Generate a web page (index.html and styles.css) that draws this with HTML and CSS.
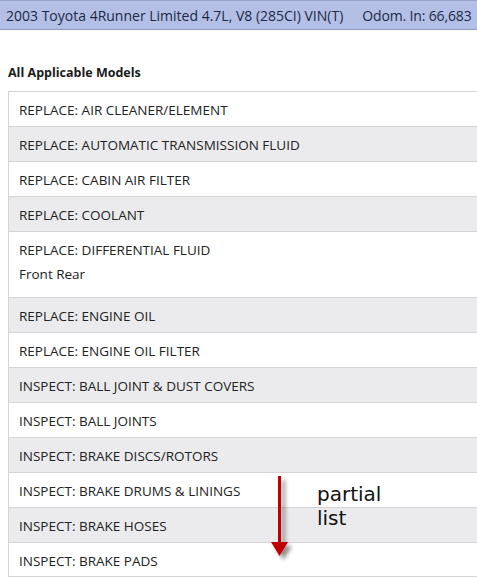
FILE: index.html
```html
<!DOCTYPE html>
<html>
<head>
<meta charset="utf-8">
<link rel="stylesheet" href="styles.css">
</head>
<body>
<div class="vehicle-bar">
  <span>2003 Toyota 4Runner Limited 4.7L, V8 (285CI) VIN(T)</span>
  <span class="odom">Odom. In: 66,683</span>
</div>
<div class="content">
  <h2 class="section-title">All Applicable Models</h2>
  <ul class="ops">
    <li class="op">REPLACE: AIR CLEANER/ELEMENT</li>
    <li class="op alt">REPLACE: AUTOMATIC TRANSMISSION FLUID</li>
    <li class="op">REPLACE: CABIN AIR FILTER</li>
    <li class="op alt">REPLACE: COOLANT</li>
    <li class="op">REPLACE: DIFFERENTIAL FLUID<div class="sub">Front Rear</div></li>
    <li class="op alt">REPLACE: ENGINE OIL</li>
    <li class="op">REPLACE: ENGINE OIL FILTER</li>
    <li class="op alt">INSPECT: BALL JOINT &amp; DUST COVERS</li>
    <li class="op">INSPECT: BALL JOINTS</li>
    <li class="op alt">INSPECT: BRAKE DISCS/ROTORS</li>
    <li class="op">INSPECT: BRAKE DRUMS &amp; LININGS</li>
    <li class="op alt">INSPECT: BRAKE HOSES</li>
    <li class="op">INSPECT: BRAKE PADS</li>
  </ul>
  <div class="annotation">
    <svg class="arrow" width="30" height="100" viewBox="0 0 30 100">
      <defs>
        <filter id="sh" x="-50%" y="-20%" width="200%" height="140%">
          <feGaussianBlur in="SourceAlpha" stdDeviation="2"/>
          <feOffset dx="4" dy="4"/>
          <feComponentTransfer><feFuncA type="linear" slope="0.45"/></feComponentTransfer>
          <feMerge><feMergeNode/><feMergeNode in="SourceGraphic"/></feMerge>
        </filter>
      </defs>
      <g filter="url(#sh)">
        <rect x="12" y="3" width="3" height="68" fill="#c00000"/>
        <polygon points="5,69 22,69 13.5,83" fill="#c00000"/>
      </g>
    </svg>
    <div class="note">partial<br>list</div>
  </div>
</div>
</body>
</html>
```
FILE: styles.css
```css
html, body {
  margin: 0;
  padding: 0;
  background: #ffffff;
  overflow: hidden;
}
body {
  width: 477px;
  height: 579px;
  position: relative;
  overflow: hidden;
  font-family: "Open Sans", "Noto Sans", sans-serif;
}
.vehicle-bar {
  display: flex;
  gap: 19px;
  height: 28px;
  align-items: center;
  padding-left: 6px;
  background: #b3bfe4;
  border-top: 1px solid #9aa4c4;
  border-bottom: 1px solid #8e99bb;
  color: #1b2a4a;
  font-size: 14px;
  white-space: nowrap;
  overflow: hidden;
}
.odom {
  letter-spacing: -0.15px;
}
.content {
  padding-left: 8px;
}
.section-title {
  margin: 0;
  padding-top: 34px;
  height: 27px;
  font-size: 12.5px;
  font-weight: bold;
  color: #1a1a1a;
}
.ops {
  list-style: none;
  margin: 0;
  padding: 0;
  border-left: 1px solid #d4d4d4;
  width: 469px;
}
.op {
  border-top: 1px solid #d4d4d4;
  min-height: 35px;
  padding: 9px 10px 0;
  box-sizing: border-box;
  font-size: 13.5px;
  line-height: 18px;
  color: #222;
}
.op.alt {
  background: #ebebed;
}
.op .sub {
  padding-top: 6px;
  padding-bottom: 14px;
  line-height: 18px;
}
.ops .op:last-child {
  border-bottom: 1px solid #d4d4d4;
}
.annotation {
  position: absolute;
  left: 266px;
  top: 473px;
  display: flex;
}
.note {
  margin-left: 21px;
  margin-top: 9px;
  font-family: "DejaVu Sans", Verdana, sans-serif;
  font-size: 20px;
  line-height: 24px;
  color: #111;
}
```
